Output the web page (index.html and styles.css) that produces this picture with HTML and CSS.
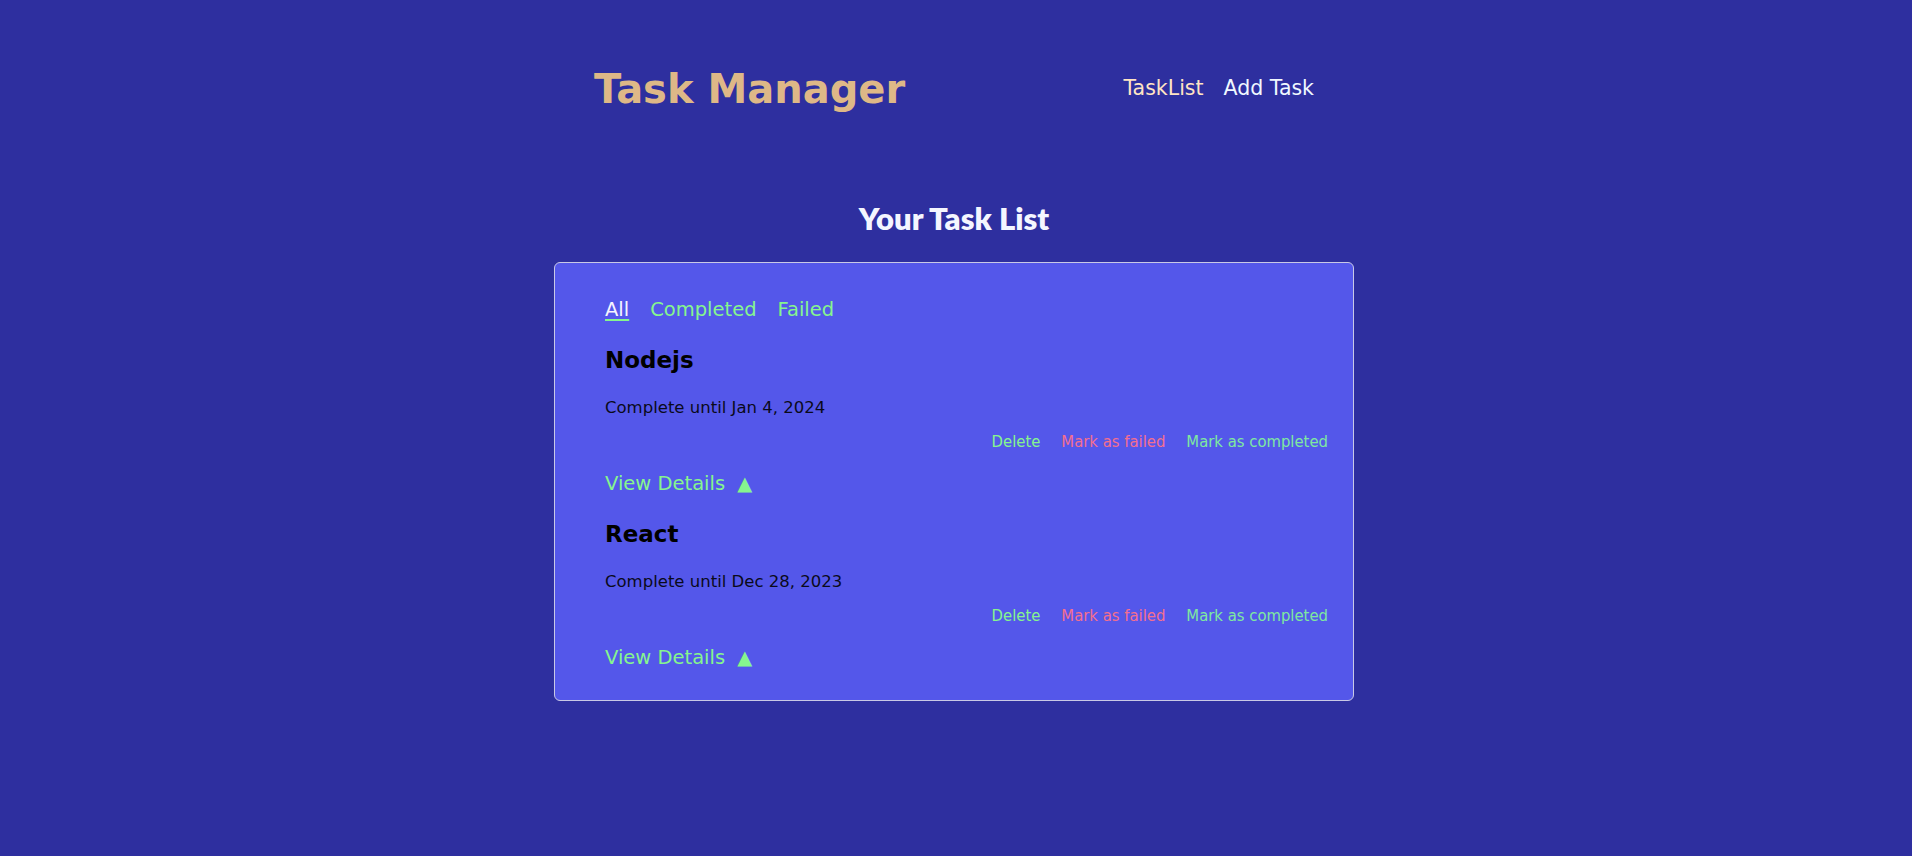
FILE: index.html
```html
<!DOCTYPE html>
<html lang="en">
<head>
<meta charset="utf-8">
<title>Task Manager</title>
<link rel="stylesheet" href="styles.css">
</head>
<body>
<div class="page">
  <header class="header">
    <h1 class="brand">Task Manager</h1>
    <nav class="nav">
      <a class="nav-link nav-link--active" href="#">TaskList</a>
      <a class="nav-link" href="#">Add Task</a>
    </nav>
  </header>

  <h2 class="page-title">Your Task List</h2>

  <section class="card">
    <div class="filters">
      <a class="filter filter--active" href="#">All</a>
      <a class="filter" href="#">Completed</a>
      <a class="filter" href="#">Failed</a>
    </div>

    <article class="task">
      <h3 class="task-title">Nodejs</h3>
      <p class="task-date">Complete until Jan 4, 2024</p>
      <div class="task-actions">
        <button class="action action--delete">Delete</button>
        <button class="action action--fail">Mark as failed</button>
        <button class="action action--complete">Mark as completed</button>
      </div>
      <a class="details" href="#">View Details <span class="details-arrow">▲</span></a>
    </article>

    <article class="task">
      <h3 class="task-title">React</h3>
      <p class="task-date">Complete until Dec 28, 2023</p>
      <div class="task-actions">
        <button class="action action--delete">Delete</button>
        <button class="action action--fail">Mark as failed</button>
        <button class="action action--complete">Mark as completed</button>
      </div>
      <a class="details" href="#">View Details <span class="details-arrow">▲</span></a>
    </article>
  </section>
</div>
</body>
</html>
```

FILE: styles.css
```css
html, body {
  margin: 0;
  padding: 0;
}

body {
  background: #2e2f9f;
  font-family: "DejaVu Sans", Verdana, sans-serif;
  padding-right: 4px;
  min-height: 856px;
  box-sizing: border-box;
}

.page {
  width: 800px;
  margin: 0 auto;
  display: flex;
  flex-direction: column;
}

.header {
  display: flex;
  justify-content: space-between;
  align-items: center;
  padding: 66px 40px 0;
}

.brand {
  margin: 0;
  font-family: "DejaVu Sans", Verdana, sans-serif;
  font-weight: bold;
  font-size: 40px;
  line-height: 46px;
  color: #deb887;
}

.nav {
  display: flex;
  gap: 20px;
  margin-top: -2px;
}

.nav-link {
  font-family: "DejaVu Sans", sans-serif;
  font-size: 20.5px;
  line-height: 24px;
  color: #f0f8ff;
  text-decoration: none;
}

.nav-link--active {
  color: #ffe4c4;
}

.page-title {
  margin: 87px 0 25px;
  text-align: center;
  font-family: Lato, "Open Sans", sans-serif;
  font-weight: 800;
  font-size: 31px;
  line-height: 38px;
  color: #f4f6ff;
  letter-spacing: 0;
}

.card {
  background: #5457ea;
  border: 1px solid #c9c9e6;
  border-radius: 6px;
  padding: 35px 25px 30px 50px;
  display: flex;
  flex-direction: column;
}

.filters {
  display: flex;
  gap: 21px;
}

.filter {
  font-family: "DejaVu Sans", sans-serif;
  font-size: 19.5px;
  line-height: 24px;
  color: #86f58e;
  text-decoration: none;
}

.filter--active {
  color: #f6f4ff;
  text-decoration: underline;
  text-decoration-color: #86f58e;
  text-decoration-thickness: 2px;
  text-underline-offset: 3px;
}

.task {
  display: flex;
  flex-direction: column;
  margin-top: 24px;
}

.task-title {
  margin: 0;
  font-family: "DejaVu Sans", sans-serif;
  font-weight: bold;
  font-size: 23px;
  line-height: 28px;
  color: #000;
}

.task-date {
  margin: 24px 0 0;
  font-family: "DejaVu Sans", sans-serif;
  font-size: 16.5px;
  line-height: 20px;
  color: #0a0a1a;
}

.task-actions {
  display: flex;
  justify-content: flex-end;
  gap: 21px;
  margin-top: 14px;
}

.action {
  background: none;
  border: 0;
  padding: 0;
  margin: 0;
  cursor: pointer;
  font-family: "DejaVu Sans Condensed", "DejaVu Sans", sans-serif;
  font-stretch: condensed;
  font-size: 16.5px;
  line-height: 20px;
}

.action--delete {
  color: #86f58e;
}

.action--fail {
  color: #f56f8f;
}

.action--complete {
  color: #7fe8a0;
}

.details {
  align-self: flex-start;
  margin-top: 20px;
  font-family: "DejaVu Sans", sans-serif;
  font-size: 19.5px;
  line-height: 24px;
  color: #86f58e;
  text-decoration: none;
}

.details-arrow {
  margin-left: 6px;
}
```
